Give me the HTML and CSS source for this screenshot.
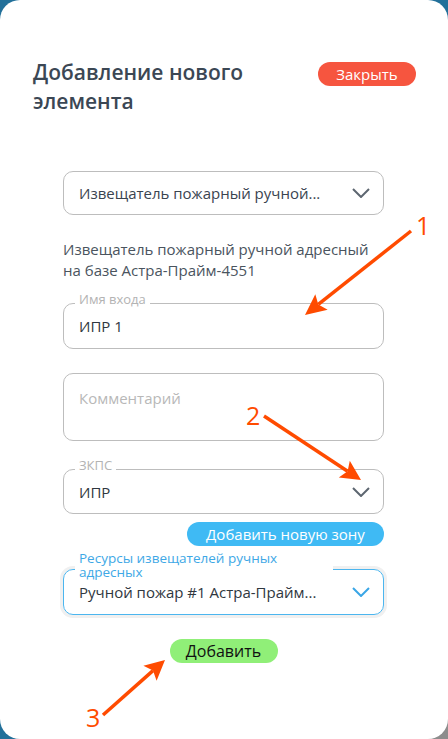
FILE: index.html
```html
<!DOCTYPE html>
<html lang="ru">
<head>
<meta charset="utf-8">
<title>Добавление нового элемента</title>
<link rel="stylesheet" href="styles.css">
</head>
<body>
<div class="card">
  <header class="head">
    <h1 class="title">Добавление нового элемента</h1>
    <button class="btn btn-close" type="button">Закрыть</button>
  </header>
  <form class="form">
    <div class="select">
      <span class="select-text">Извещатель пожарный ручной...</span>
      <svg class="chev" width="18" height="10" viewBox="0 0 18 10"><polyline points="1,1 9,9 17,1"/></svg>
    </div>
    <p class="desc">Извещатель пожарный ручной адресный на базе Астра-Прайм-4551</p>
    <div class="field f-name">
      <span class="legend">Имя входа</span>
      <span class="value">ИПР 1</span>
    </div>
    <div class="field f-comment">
      <span class="placeholder">Комментарий</span>
    </div>
    <div class="field f-zone">
      <span class="legend">ЗКПС</span>
      <span class="value">ИПР</span>
      <svg class="chev" width="18" height="10" viewBox="0 0 18 10"><polyline points="1,1 9,9 17,1"/></svg>
    </div>
    <div class="zone-row">
      <button class="btn btn-zone" type="button">Добавить новую зону</button>
    </div>
    <div class="field f-res">
      <span class="legend legend-wide">Ресурсы извещателей ручных адресных</span>
      <span class="value">Ручной пожар #1 Астра-Прайм...</span>
      <svg class="chev chev-blue" width="18" height="10" viewBox="0 0 18 10"><polyline points="1,1 9,9 17,1"/></svg>
    </div>
    <div class="submit-row">
      <button class="btn btn-add" type="button">Добавить</button>
    </div>
  </form>
  <svg class="annot" width="448" height="739" viewBox="0 0 448 739">
    <g class="arrow">
      <line x1="411" y1="231" x2="318.3" y2="304.4"/>
      <polygon points="305,315 315.3,294.2 318.3,304.4 327.7,309.8"/>
      <line x1="264" y1="416" x2="347.6" y2="471.2"/>
      <polygon points="361,480 338.8,477.4 347.6,471.2 349.8,460.7"/>
      <line x1="103" y1="715" x2="153" y2="670.6"/>
      <polygon points="165,660 156.6,680.8 153,670.6 143.4,665.8"/>
    </g>
    <text class="num" x="416" y="235">1</text>
    <text class="num" x="246" y="425">2</text>
    <text class="num" x="86" y="727">3</text>
  </svg>
</div>
</body>
</html>
```
FILE: styles.css
```css
* {
  box-sizing: border-box;
}

html,
body {
  margin: 0;
  height: 100%;
}

body {
  background: linear-gradient(135deg, #22709a 97%, #8d8d8d 97%);
  overflow: hidden;
  font-family: "Open Sans", "Noto Sans", sans-serif;
}

.card {
  position: relative;
  height: 739px;
  background: #fff;
  border-radius: 20px;
  padding: 58px 32px 0 33px;
}

.head {
  display: flex;
  justify-content: space-between;
  align-items: flex-start;
}

.title {
  margin: 0;
  font-size: 21px;
  line-height: 29px;
  font-weight: 600;
  color: #3b4754;
  max-width: 240px;
}

.btn {
  border: 0;
  border-radius: 12px;
  font-family: inherit;
  padding: 0;
  height: 24px;
  line-height: 24px;
  cursor: pointer;
}

.btn-close {
  margin-top: 4px;
  width: 98px;
  background: #f6553f;
  color: #fff;
  font-size: 15px;
}

.form {
  margin: 55px 0 0 30px;
  width: 321px;
}

.select,
.field {
  position: relative;
  border: 1px solid #bdbdbd;
  border-radius: 10px;
  display: flex;
  align-items: center;
  justify-content: space-between;
  padding: 0 13px 0 15px;
  font-size: 15px;
}

.select {
  height: 44px;
  color: #3a4450;
}

.desc {
  margin: 24px 0 0;
  font-size: 15px;
  line-height: 21px;
  color: #4a545e;
}

.value {
  color: #2f3740;
}

.chev {
  fill: none;
  stroke: #5d6670;
  stroke-width: 2;
}

.chev-blue {
  stroke: #3aa6e6;
}

.f-name {
  margin-top: 22px;
  height: 46px;
}

.f-comment {
  margin-top: 24px;
  height: 68px;
  align-items: flex-start;
  padding-top: 13px;
}

.placeholder {
  color: #b8b8b8;
  line-height: 22px;
}

.f-zone {
  margin-top: 28px;
  height: 45px;
}

.legend {
  position: absolute;
  left: 11px;
  top: -13px;
  padding: 0 4px;
  background: #fff;
  font-size: 13px;
  line-height: 16px;
  color: #b3b3b3;
}

.zone-row {
  display: flex;
  justify-content: flex-end;
  margin-top: 8px;
}

.btn-zone {
  width: 197px;
  background: #3fbaf4;
  color: #fff;
  font-size: 15px;
}

.f-res {
  margin-top: 23px;
  height: 46px;
  border-color: #4cb6ef;
  box-shadow: 0 0 0 3px #f0f0f0;
}

.legend-wide {
  width: 258px;
  top: -19px;
  font-size: 13.5px;
  line-height: 14px;
  color: #3ea8e6;
}

.submit-row {
  display: flex;
  justify-content: center;
  margin-top: 24px;
}

.btn-add {
  width: 108px;
  background: #90ef78;
  color: #111;
  font-size: 16px;
}

.annot {
  position: absolute;
  left: 0;
  top: 0;
  pointer-events: none;
}

.arrow line {
  stroke: #ff4b00;
  stroke-width: 3.5;
}

.arrow polygon {
  fill: #ff4b00;
}

.num {
  font-family: "Open Sans", sans-serif;
  font-size: 25px;
  fill: #ff4b00;
}
```
